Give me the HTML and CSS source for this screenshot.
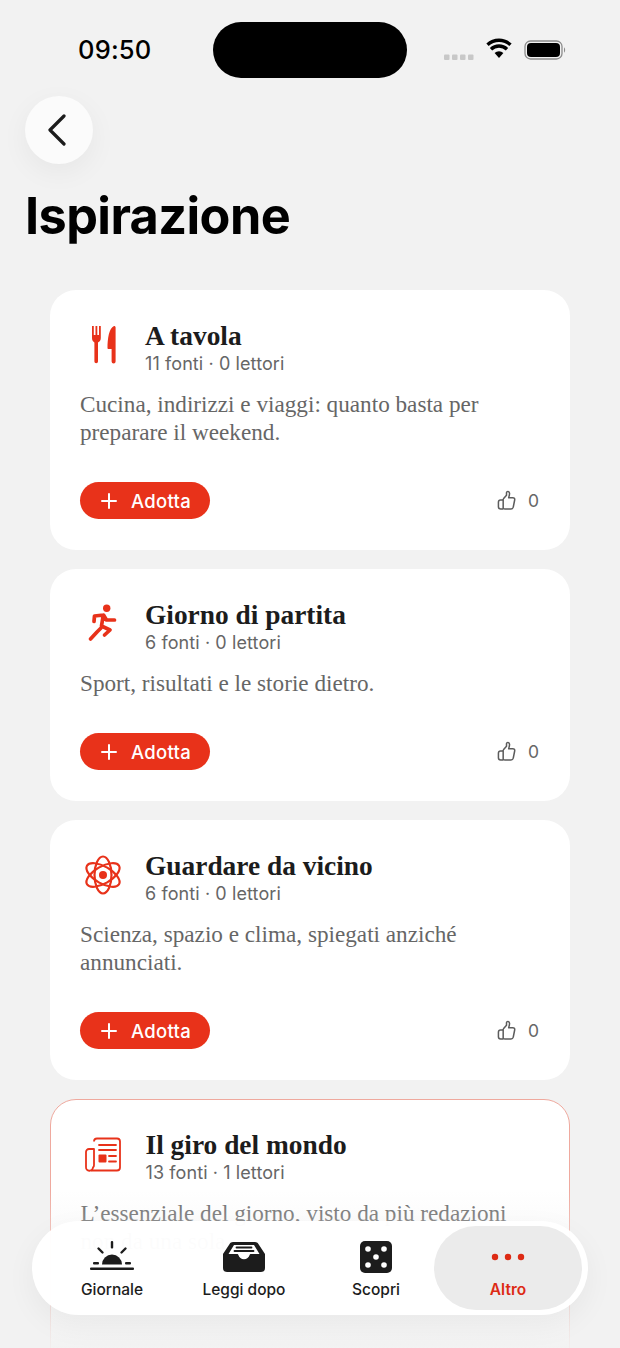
FILE: index.html
```html
<!DOCTYPE html>
<html lang="it">
<head>
<meta charset="utf-8">
<title>Ispirazione</title>
<link rel="stylesheet" href="styles.css">
</head>
<body>
<div class="screen">
  <div class="status">
    <span class="time">09:50</span>
    <div class="status-icons">
      <svg class="signal" width="30" height="8" viewBox="0 0 30 8"><g fill="#c8c8c8"><rect x="0" y="1.500" width="5.500" height="5.500" rx="1"/><rect x="8" y="1.500" width="5.500" height="5.500" rx="1"/><rect x="16" y="1.500" width="5.500" height="5.500" rx="1"/><rect x="24" y="1.500" width="5.500" height="5.500" rx="1"/></g></svg>
      <svg class="wifi" width="26" height="22" viewBox="0 0 26 22"><path d="M13 20l-4.400-5a6.400 6.400 0 0 1 8.800 0z" fill="#000"/><path d="M5 11.200a11.500 11.500 0 0 1 16 0M1.500 6.800a17 17 0 0 1 23 0" fill="none" stroke="#000" stroke-width="3.400"/></svg>
      <svg class="battery" width="42" height="20" viewBox="0 0 42 20"><rect x="1" y="1" width="37" height="18" rx="5.500" fill="none" stroke="#8c8c8c" stroke-width="1.300"/><rect x="3" y="3" width="33" height="14" rx="4" fill="#000"/><path d="M40 7.500c1.500.4 1.500 4.600 0 5z" fill="#8c8c8c"/></svg>
    </div>
  </div>
  <div class="island"></div>

  <button class="back" aria-label="Indietro">
    <svg width="24" height="32" viewBox="0 0 24 32"><path d="M19 2L5 16l14 14" fill="none" stroke="#1c1c1c" stroke-width="3.200" stroke-linecap="round" stroke-linejoin="round"/></svg>
  </button>

  <h1 class="title">Ispirazione</h1>

  <main class="list">
    <article class="card">
      <header class="card-head">
        <div class="card-icon">
          <svg width="40" height="40" viewBox="0 0 40 40"><path fill="#e8321a" d="M9 1h1.800v9h1.700V1h1.800v9H16V1h1.800v12c0 2.500-1.300 3.800-2.800 4.500V36.500a1.800 1.800 0 0 1-3.600 0V17.500C10.300 16.800 9 15.500 9 13z"/><path fill="#e8321a" d="M31 1c.9 0 1.600.6 1.600 1.400V36.500a2 2 0 0 1-4 0V24h-3c-.7 0-1.100-.5-1.100-1.100C24.500 14 26 3 31 1z"/></svg>
        </div>
        <div class="card-heading">
          <h2>A tavola</h2>
          <p class="meta">11 fonti · 0 lettori</p>
        </div>
      </header>
      <p class="desc">Cucina, indirizzi e viaggi: quanto basta per preparare il weekend.</p>
      <footer class="card-foot">
        <button class="adopt"><svg width="16" height="16" viewBox="0 0 16 16"><path d="M8 1v14M1 8h14" stroke="#fff" stroke-width="2" stroke-linecap="round"/></svg>Adotta</button>
        <span class="likes"><svg width="19" height="21" viewBox="0 0 20 22"><path d="M6.500 9.500L10 5.500V2.800c0-1.800 3-1.800 3.200.6.100 1.500-.5 3.300-.9 4.600h4.200c1.600 0 2.400 1.100 2.100 2.500l-1.500 7.500c-.3 1.300-1.100 2-2.400 2H8.500c-1 0-1.600-.4-2-1M6.500 9.500v10.400M6.500 10.500H3.800c-1.500 0-2.300 1-2.300 2.300v4.800c0 1.500.9 2.300 2.300 2.300h2.700" fill="none" stroke="#5c5c5c" stroke-width="1.600" stroke-linejoin="round"/></svg><span>0</span></span>
      </footer>
    </article>

    <article class="card">
      <header class="card-head">
        <div class="card-icon">
          <svg width="40" height="40" viewBox="0 0 40 40"><circle cx="23.700" cy="4.300" r="3.700" fill="#e8321a"/><path d="M11 17.500l.5-5.500 9-1 3 5 8 0M20.300 11l-1.800 11 8.500 4-5.500 5M18 24l-4 4-6.500 7" fill="none" stroke="#e8321a" stroke-width="3.700" stroke-linecap="round" stroke-linejoin="round"/></svg>
        </div>
        <div class="card-heading">
          <h2>Giorno di partita</h2>
          <p class="meta">6 fonti · 0 lettori</p>
        </div>
      </header>
      <p class="desc">Sport, risultati e le storie dietro.</p>
      <footer class="card-foot">
        <button class="adopt"><svg width="16" height="16" viewBox="0 0 16 16"><path d="M8 1v14M1 8h14" stroke="#fff" stroke-width="2" stroke-linecap="round"/></svg>Adotta</button>
        <span class="likes"><svg width="19" height="21" viewBox="0 0 20 22"><path d="M6.500 9.500L10 5.500V2.800c0-1.800 3-1.800 3.200.6.100 1.500-.5 3.300-.9 4.600h4.200c1.600 0 2.400 1.100 2.100 2.500l-1.500 7.500c-.3 1.300-1.100 2-2.400 2H8.500c-1 0-1.600-.4-2-1M6.500 9.500v10.400M6.500 10.500H3.800c-1.500 0-2.300 1-2.300 2.300v4.800c0 1.500.9 2.300 2.300 2.300h2.700" fill="none" stroke="#5c5c5c" stroke-width="1.600" stroke-linejoin="round"/></svg><span>0</span></span>
      </footer>
    </article>

    <article class="card">
      <header class="card-head">
        <div class="card-icon">
          <svg width="40" height="40" viewBox="0 0 40 40"><g fill="none" stroke="#e8321a" stroke-width="2.200"><ellipse cx="20" cy="20" rx="8.500" ry="18.500"/><ellipse cx="20" cy="20" rx="8.500" ry="18.500" transform="rotate(60 20 20)"/><ellipse cx="20" cy="20" rx="8.500" ry="18.500" transform="rotate(-60 20 20)"/></g><circle cx="20" cy="20" r="4" fill="#e8321a"/></svg>
        </div>
        <div class="card-heading">
          <h2>Guardare da vicino</h2>
          <p class="meta">6 fonti · 0 lettori</p>
        </div>
      </header>
      <p class="desc">Scienza, spazio e clima, spiegati anziché annunciati.</p>
      <footer class="card-foot">
        <button class="adopt"><svg width="16" height="16" viewBox="0 0 16 16"><path d="M8 1v14M1 8h14" stroke="#fff" stroke-width="2" stroke-linecap="round"/></svg>Adotta</button>
        <span class="likes"><svg width="19" height="21" viewBox="0 0 20 22"><path d="M6.500 9.500L10 5.500V2.800c0-1.800 3-1.800 3.200.6.100 1.500-.5 3.300-.9 4.600h4.200c1.600 0 2.400 1.100 2.100 2.500l-1.500 7.500c-.3 1.300-1.100 2-2.400 2H8.500c-1 0-1.600-.4-2-1M6.500 9.500v10.400M6.500 10.500H3.800c-1.500 0-2.300 1-2.300 2.300v4.800c0 1.500.9 2.300 2.300 2.300h2.700" fill="none" stroke="#5c5c5c" stroke-width="1.600" stroke-linejoin="round"/></svg><span>0</span></span>
      </footer>
    </article>

    <article class="card card-selected">
      <header class="card-head">
        <div class="card-icon">
          <svg width="40" height="40" viewBox="0 0 40 40"><g fill="none" stroke="#e8321a" stroke-width="1.800" stroke-linejoin="round"><path d="M10 7.500a3 3 0 0 1 3-3h20a3 3 0 0 1 3 3v26a3 3 0 0 1-3 3H7"/><path d="M10 15H5a3 3 0 0 0-3 3v15a3.500 3.500 0 0 0 7 0.500 3 3 0 0 0 1-2.500z"/><path d="M15 11h17M15 16h17M25 22h7M25 27.500h7" stroke-linecap="round"/></g><rect x="14.500" y="20.500" width="8" height="8" rx="1" fill="#e8321a"/></svg>
        </div>
        <div class="card-heading">
          <h2>Il giro del mondo</h2>
          <p class="meta">13 fonti · 1 lettori</p>
        </div>
      </header>
      <p class="desc">L’essenziale del giorno, visto da più redazioni non da una sola.</p>
    </article>
  </main>

  <div class="fade"></div>

  <nav class="tabbar">
    <a class="tab">
      <svg width="46" height="32" viewBox="0 0 46 32"><g fill="#1c1c1c"><path d="M13 23.500a10 10 0 0 1 20 0z"/><rect x="21.800" y="0" width="2.400" height="7.500" rx="1"/><rect x="1" y="26.500" width="44" height="2.600" rx="1"/><rect x="4" y="21" width="6" height="2.400" rx="1"/><rect x="36" y="21" width="6" height="2.400" rx="1"/></g><path d="M9.500 7.500l4 4M36.500 7.500l-4 4" stroke="#1c1c1c" stroke-width="2.400" stroke-linecap="round"/></svg>
      <span>Giornale</span>
    </a>
    <a class="tab">
      <svg width="44" height="32" viewBox="0 0 44 32"><path fill="#1c1c1c" fill-rule="evenodd" d="M11 1h22c1.500 0 2.600.7 3.400 1.900L43 13v14a4 4 0 0 1-4 4H5a4 4 0 0 1-4-4V13L7.600 2.900C8.400 1.700 9.500 1 11 1zm1 3L6.500 13H15c.8 0 1.300.5 1.500 1.200.6 2.300 2.800 4 5.500 4s4.900-1.700 5.500-4c.2-.7.700-1.200 1.500-1.200h8.500L32 4z"/><path d="M14.500 6.500h15M12.500 10h19" stroke="#1c1c1c" stroke-width="1.800" stroke-linecap="round"/></svg>
      <span>Leggi dopo</span>
    </a>
    <a class="tab">
      <svg width="32" height="32" viewBox="0 0 32 32"><rect width="32" height="32" rx="5" fill="#1c1c1c"/><g fill="#fff"><circle cx="8" cy="8" r="2.800"/><circle cx="24" cy="8" r="2.800"/><circle cx="16" cy="16" r="2.800"/><circle cx="8" cy="24" r="2.800"/><circle cx="24" cy="24" r="2.800"/></g></svg>
      <span>Scopri</span>
    </a>
    <a class="tab tab-active">
      <svg width="34" height="32" viewBox="0 0 34 32"><g fill="#dd2a14"><circle cx="4" cy="16" r="3.200"/><circle cx="17" cy="16" r="3.200"/><circle cx="30" cy="16" r="3.200"/></g></svg>
      <span>Altro</span>
    </a>
  </nav>
</div>
</body>
</html>
```

FILE: styles.css
```css
* { box-sizing: border-box; }
html, body { margin: 0; padding: 0; height: 100%; }
body {
  background: #f2f2f2;
  color: #000;
  font-family: Inter, "Liberation Sans", sans-serif;
}
.screen {
  position: relative;
  height: 1348px;
  overflow: hidden;
  background: #f2f2f2;
}
.status {
  height: 96px;
  padding: 32px 54px 0 78px;
  display: flex;
  justify-content: space-between;
  align-items: flex-start;
}
.time {
  font-size: 25.500px;
  line-height: 36px;
  font-weight: 500;
  letter-spacing: .2px;
}
.status-icons {
  display: flex;
  align-items: center;
  gap: 12px;
  height: 36px;
}
.signal { margin-top: 13px; }
.wifi { margin-top: -2px; }
.island {
  position: absolute;
  left: 213px;
  top: 22px;
  width: 194px;
  height: 56px;
  border-radius: 28px;
  background: #000;
}
.back {
  display: flex;
  align-items: center;
  justify-content: center;
  width: 68px;
  height: 68px;
  margin-left: 25px;
  padding: 0 5px 0 0;
  border: 0;
  border-radius: 50%;
  background: #fbfbfb;
  box-shadow: 0 8px 28px rgba(0,0,0,.05);
}
.title {
  margin: 22px 0 0 25px;
  font-size: 50.400px;
  line-height: 60px;
  font-weight: 700;
  letter-spacing: -.6px;
}
.list {
  display: flex;
  flex-direction: column;
  gap: 19px;
  margin-top: 44px;
  padding: 0 50px;
}
.card {
  padding: 30px 31px 31px 30px;
  border-radius: 26px;
  background: #fff;
}
.card-selected {
  min-height: 300px;
  border: 1.500px solid #efa99e;
  padding: 28.500px 29.500px;
}
.card-head {
  display: flex;
  align-items: flex-start;
  height: 59px;
}
.card-icon {
  width: 65px;
  padding: 5px 0 0 3px;
}
.card-icon svg { display: block; }
.card-heading h2 {
  margin: 0;
  font-family: "Liberation Serif", serif;
  font-size: 27.400px;
  line-height: 32px;
  font-weight: 700;
  color: #1c1c1c;
}
.meta {
  margin: 0;
  font-size: 18px;
  line-height: 24px;
  letter-spacing: .1px;
  color: #666;
}
.desc {
  margin: 11px 0 0;
  font-family: "Liberation Serif", serif;
  font-size: 23.200px;
  line-height: 28px;
  color: #666;
}
.card-foot {
  display: flex;
  justify-content: space-between;
  align-items: center;
  margin-top: 36px;
}
.adopt {
  display: flex;
  align-items: center;
  gap: 14px;
  width: 130px;
  height: 37px;
  padding: 0 0 0 21px;
  border: 0;
  border-radius: 19px;
  background: #e8321a;
  color: #fff;
  font: 500 18.500px Inter, sans-serif;
  letter-spacing: .3px;
}
.likes {
  display: flex;
  align-items: center;
  gap: 12px;
  font-size: 17.500px;
  color: #666;
}
.fade {
  position: absolute;
  left: 0;
  right: 0;
  top: 1190px;
  bottom: 0;
  background: linear-gradient(to bottom, rgba(242,242,242,0), rgba(242,242,242,.35) 25%, rgba(242,242,242,.95));
}
.tabbar {
  position: absolute;
  left: 32px;
  top: 1221px;
  width: 556px;
  height: 94px;
  padding: 5px 14px;
  display: grid;
  grid-template-columns: repeat(4, 1fr);
  border-radius: 47px;
  background: rgba(255,255,255,.97);
  box-shadow: 0 10px 30px rgba(0,0,0,.05);
}
.tab {
  display: flex;
  flex-direction: column;
  align-items: center;
  justify-content: flex-start;
  gap: 7px;
  padding-top: 15px;
  font-size: 15.500px;
  line-height: 20px;
  font-weight: 500;
  color: #1c1c1c;
}
.tab svg { display: block; }
.tab-active {
  margin: 0 -8px;
  border-radius: 42px;
  background: #ebebeb;
  color: #dd2a14;
  font-weight: 600;
}
```
